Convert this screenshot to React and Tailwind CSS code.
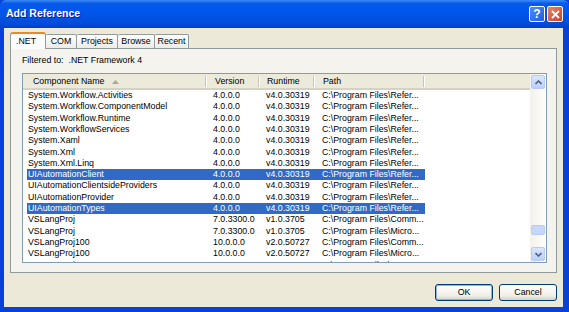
const rows = [
  ["System.Workflow.Activities", "4.0.0.0", "v4.0.30319", "C:\\Program Files\\Refer..."],
  ["System.Workflow.ComponentModel", "4.0.0.0", "v4.0.30319", "C:\\Program Files\\Refer..."],
  ["System.Workflow.Runtime", "4.0.0.0", "v4.0.30319", "C:\\Program Files\\Refer..."],
  ["System.WorkflowServices", "4.0.0.0", "v4.0.30319", "C:\\Program Files\\Refer..."],
  ["System.Xaml", "4.0.0.0", "v4.0.30319", "C:\\Program Files\\Refer..."],
  ["System.Xml", "4.0.0.0", "v4.0.30319", "C:\\Program Files\\Refer..."],
  ["System.Xml.Linq", "4.0.0.0", "v4.0.30319", "C:\\Program Files\\Refer..."],
  ["UIAutomationClient", "4.0.0.0", "v4.0.30319", "C:\\Program Files\\Refer...", true],
  ["UIAutomationClientsideProviders", "4.0.0.0", "v4.0.30319", "C:\\Program Files\\Refer..."],
  ["UIAutomationProvider", "4.0.0.0", "v4.0.30319", "C:\\Program Files\\Refer..."],
  ["UIAutomationTypes", "4.0.0.0", "v4.0.30319", "C:\\Program Files\\Refer...", true],
  ["VSLangProj", "7.0.3300.0", "v1.0.3705", "C:\\Program Files\\Comm..."],
  ["VSLangProj", "7.0.3300.0", "v1.0.3705", "C:\\Program Files\\Micro..."],
  ["VSLangProj100", "10.0.0.0", "v2.0.50727", "C:\\Program Files\\Comm..."],
  ["VSLangProj100", "10.0.0.0", "v2.0.50727", "C:\\Program Files\\Micro..."],
  ["VSLangProj2", "7.0.5000.0", "v1.1.4322", "C:\\Program Files\\Comm..."],
];

const tabs = [
  ["COM", "w-[31px]"],
  ["Projects", "w-[41px]"],
  ["Browse", "w-[37px]"],
  ["Recent", "w-[34px]"],
];

function Sep() {
  return <div className="ml-auto h-[11px] w-[2px] border-l border-[#c7c5b2] border-r border-r-white" />;
}

function ScrollBtn({ down }) {
  return (
    <div className="flex h-[14px] w-[14px] items-center justify-center rounded-[2px] border border-[#b7cbf5] bg-[linear-gradient(to_bottom,#dbe6fd,#bccffa)]">
      <svg width="7" height="5" viewBox="0 0 7 5">
        <path d={down ? "M0.5 1 L3.5 4 L6.5 1" : "M0.5 4 L3.5 1 L6.5 4"} fill="none" stroke="#4d6185" strokeWidth="1.6" />
      </svg>
    </div>
  );
}

export default function App() {
  return (
    <div className="flex h-[312px] w-[569px] flex-col overflow-hidden bg-[#0841d8] font-['Liberation_Sans',Arial,sans-serif] text-[8.8px] text-black">
      {/* title bar */}
      <div className="flex h-[28px] items-center rounded-t-[6px] bg-[linear-gradient(to_bottom,#3b8cf5_0%,#0a5ae8_12%,#0058ee_30%,#0053e4_60%,#004bd8_85%,#0040c8_100%)] pl-[6px] pr-[6px]">
        <span className="text-[10.5px] font-bold text-white [text-shadow:1px_1px_0_#0a1e8c]">Add Reference</span>
        <div className="ml-auto flex gap-[2px]">
          <div className="flex h-[16px] w-[16px] items-center justify-center rounded-[2px] border border-white bg-[linear-gradient(135deg,#4d8cf7,#1f5fe0)] text-[12px] font-bold leading-none text-white">?</div>
          <div className="flex h-[16px] w-[16px] items-center justify-center rounded-[2px] border border-white bg-[linear-gradient(135deg,#e8846a,#c94320)]">
            <svg width="9" height="9" viewBox="0 0 9 9">
              <path d="M1 1 L8 8 M8 1 L1 8" stroke="white" strokeWidth="1.8" />
            </svg>
          </div>
        </div>
      </div>

      {/* body */}
      <div className="mb-[5px] ml-[4px] mr-[6px] flex flex-1 flex-col bg-[#ece9d8] px-[6px] pt-[4px]">
        {/* tabs */}
        <div className="flex items-end">
          <div className="relative z-10 -mb-px h-[17px] w-[36px] rounded-t-[3px] border border-b-0 border-[#919b9c] border-t-[2px] border-t-[#e68b2c] bg-[#fcfcfe] pl-[5px] pt-[1px]">.NET</div>
          {tabs.map(([t, w]) => (
            <div key={t} className={"flex h-[14px] items-center justify-center rounded-t-[2px] border border-b-0 border-l-0 border-[#919b9c] bg-[linear-gradient(to_bottom,#ffffff,#ecebe5)] " + w}>
              {t}
            </div>
          ))}
        </div>

        {/* panel */}
        <div className="flex h-[225px] flex-col border border-[#919b9c] bg-[#f4f3ee] pl-[11px] pr-[9px]">
          <div className="flex h-[23px] items-center">Filtered to:&nbsp; .NET Framework 4</div>
          <div className="mt-[1px] flex h-[190px] border border-[#7f9db9] bg-white">
            <div className="flex flex-1 flex-col overflow-hidden">
              {/* header */}
              <div className="flex h-[16px] shrink-0 items-center border-b-[2px] border-[#d6d2c2] bg-[#ebeadb] pt-[1px]">
                <div className="flex w-[184px] items-center pl-[10px]">
                  Component Name
                  <svg className="ml-[8px]" width="7" height="4" viewBox="0 0 7 4">
                    <path d="M0 4 L3.5 0 L7 4 Z" fill="#aca899" />
                  </svg>
                  <Sep />
                </div>
                <div className="flex w-[53px] items-center pl-[8px]">Version<Sep /></div>
                <div className="flex w-[55px] items-center pl-[7px]">Runtime<Sep /></div>
                <div className="flex w-[110px] items-center pl-[8px]">Path<Sep /></div>
              </div>
              {/* rows */}
              <div className="flex flex-col pl-[4px]">
                {rows.map((r, i) => (
                  <div
                    key={i}
                    className={
                      "flex h-[11.3px] w-[398px] shrink-0 items-center whitespace-nowrap " +
                      (r[4] ? "bg-[#316ac5] text-white" : "")
                    }
                  >
                    <div className="w-[180px] pl-[1px]">{r[0]}</div>
                    <div className="w-[54px] pl-[6px]">{r[1]}</div>
                    <div className="w-[55px] pl-[5px]">{r[2]}</div>
                    <div className="pl-[6px]">{r[3]}</div>
                  </div>
                ))}
              </div>
            </div>
            {/* scrollbar */}
            <div className="flex w-[16px] flex-col items-center bg-[linear-gradient(to_right,#f3f1ec,#fefefb)] py-[1px]">
              <ScrollBtn />
              <div className="flex-1" />
              <div className="h-[10px] w-[14px] rounded-[2px] border border-[#b7cbf5] bg-[#c6d6fc]" />
              <div className="h-[12px]" />
              <ScrollBtn down />
            </div>
          </div>
        </div>

        {/* buttons */}
        <div className="mt-[11px] flex justify-end gap-[6px]">
          <button className="h-[17px] w-[58px] rounded-[3px] border border-[#003c74] bg-[linear-gradient(to_bottom,#ffffff,#f0efe6_70%,#d6d0c5)] shadow-[inset_0_0_0_1px_#8eb1ec]">OK</button>
          <button className="h-[17px] w-[58px] rounded-[3px] border border-[#003c74] bg-[linear-gradient(to_bottom,#ffffff,#f0efe6_70%,#d6d0c5)]">Cancel</button>
        </div>
      </div>
    </div>
  );
}
